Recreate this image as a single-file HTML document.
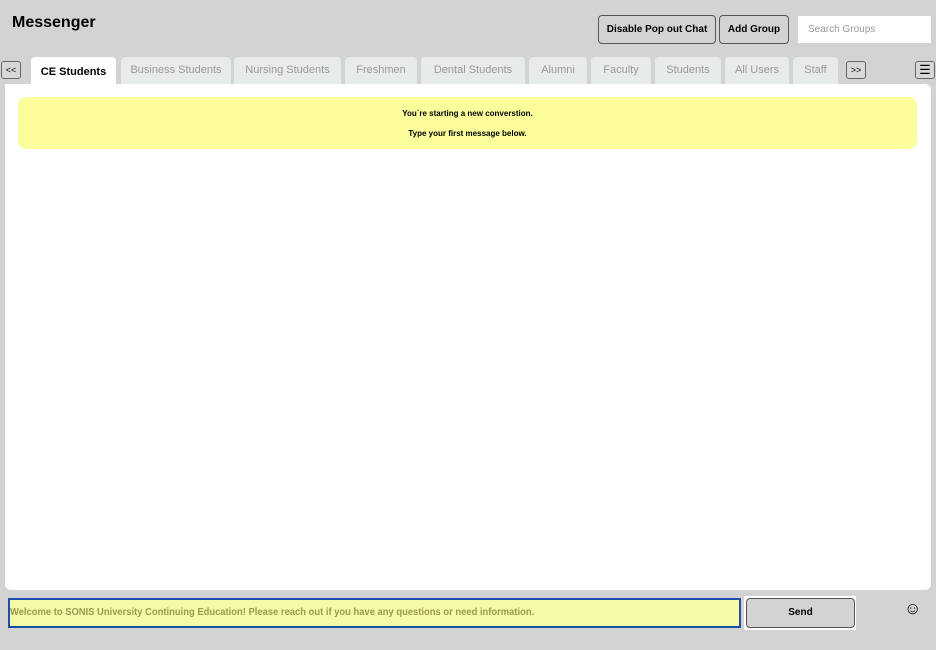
<!DOCTYPE html>
<html><head><style>
*{box-sizing:border-box;margin:0;padding:0}
body{width:936px;height:650px;background:#d3d3d3;font-family:"Liberation Sans",sans-serif;position:relative;overflow:hidden}
.a{position:absolute}
h1{position:absolute;left:12px;top:14px;font-size:16px;font-weight:bold;color:#000}
.btn{position:absolute;border:1px solid #555;border-radius:4px;background:#d3d3d3;font-size:10px;font-weight:bold;text-align:center;color:#000}
.tab{position:absolute;top:57px;height:27px;background:#e8ebec;border-radius:4px 4px 0 0;font-size:11px;color:#999;text-align:center;line-height:26px}
.sm{position:absolute;border:1px solid #666;border-radius:3px;font-size:9px;text-align:center;line-height:16px;background:#d8d8d8}
</style></head><body>
<h1>Messenger</h1>
<div class="btn" style="left:598px;top:15px;width:118px;height:29px;line-height:27px">Disable Pop out Chat</div>
<div class="btn" style="left:719px;top:15px;width:70px;height:29px;line-height:27px">Add Group</div>
<div class="a" style="left:798px;top:16px;width:133px;height:27px;background:#fff;font-size:10px;color:#999;padding-left:10px;line-height:27px">Search Groups</div>
<div class="sm" style="left:1px;top:61px;width:20px;height:18px">&lt;&lt;</div>
<div class="tab" style="left:31px;width:85px;background:#fff;color:#000;font-weight:bold;line-height:30px">CE Students</div>
<div class="tab" style="left:121px;width:110px">Business Students</div>
<div class="tab" style="left:234px;width:107px">Nursing Students</div>
<div class="tab" style="left:345px;width:72px">Freshmen</div>
<div class="tab" style="left:421px;width:104px">Dental Students</div>
<div class="tab" style="left:529px;width:58px">Alumni</div>
<div class="tab" style="left:591px;width:60px">Faculty</div>
<div class="tab" style="left:655px;width:66px">Students</div>
<div class="tab" style="left:725px;width:64px">All Users</div>
<div class="tab" style="left:793px;width:45px">Staff</div>
<div class="sm" style="left:846px;top:61px;width:20px;height:18px">&gt;&gt;</div>
<div class="sm" style="left:915px;top:61px;width:20px;height:18px;font-size:13px">☰</div>
<div class="a" style="left:5px;top:84px;width:926px;height:506px;background:#fff;border-radius:0 6px 6px 6px"></div>
<div class="a" style="left:18px;top:97px;width:899px;height:52px;background:#fcfd9b;border-radius:8px;text-align:center;font-size:8px;font-weight:bold;color:#000;padding-top:7px;line-height:20px">You`re starting a new converstion.<br>Type your first message below.</div>
<div class="a" style="left:8px;top:598px;width:733px;height:30px;background:#f6f9a6;border:2px solid #1c4fa8;overflow:hidden"><div style="font-size:10px;font-weight:bold;color:#9a9a50;line-height:26px;white-space:nowrap;transform:scaleX(0.94);transform-origin:0 0">Welcome to SONIS University Continuing Education! Please reach out if you have any questions or need information.</div></div>
<div class="a" style="left:744px;top:596px;width:112px;height:34px;background:#fff"></div>
<div class="btn" style="left:746px;top:598px;width:109px;height:30px;line-height:28px;font-size:10px">Send</div>
<div class="a" style="left:904px;top:599px;font-size:17px">☺</div>
</body></html>
